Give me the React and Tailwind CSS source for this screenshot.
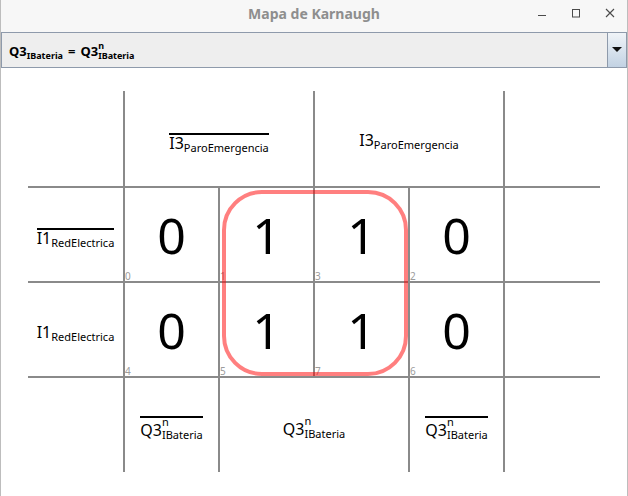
import React from 'react'

/* ───────────── small pieces ───────────── */
function Label({ main, sub, sup, bar }) {
  return (
    <div className="inline-flex flex-col text-black">
      {bar && <div className={`h-[2px] bg-black ${sup ? '-mb-[1px]' : ''}`} />}
      <div className="whitespace-nowrap text-[16px] leading-[16px]">
        <span>{main}</span>
        {sup ? (
          <span className="inline-flex flex-col gap-[3px] align-[10px] text-[11px] leading-[10px]">
            <span>{sup}</span>
            <span>{sub}</span>
          </span>
        ) : (
          <span className="align-[-3px] text-[11px]">{sub}</span>
        )}
      </div>
    </div>
  )
}

function Cell({ value, index }) {
  return (
    <div className="relative flex items-center justify-center border-t-2 border-l-2 border-[#8a8a8a]">
      <span className="text-[50px] leading-none text-black">{value}</span>
      <span className="absolute bottom-0 left-0 text-[10px] leading-none text-[#9c9c9c]">{index}</span>
    </div>
  )
}

const rows = [
  { label: true, bar: true, cells: [[0, 0], [1, 1], [1, 3], [0, 2]] },
  { label: true, bar: false, cells: [[0, 4], [1, 5], [1, 7], [0, 6]] },
]

/* ───────────── page ───────────── */
export default function App() {
  return (
    <div className="w-[628px] h-[496px] flex flex-col bg-white border-x border-[#bdbdbd] font-['Noto_Sans',sans-serif] overflow-hidden">
      {/* title bar */}
      <div className="h-[32px] shrink-0 grid grid-cols-[1fr_auto_1fr] items-start bg-[#f7f7f7]">
        <div />
        <div className="h-[26px] flex items-center text-[14px] font-bold text-[#8e8e8e]">Mapa de Karnaugh</div>
        <div className="flex justify-end">
          <div className="w-[34px] h-[26px] flex items-center justify-center">
            <svg width="16" height="16" viewBox="0 0 16 16">
              <path d="M4 10.5h8" stroke="#4a4a4a" strokeWidth="1" />
            </svg>
          </div>
          <div className="w-[34px] h-[26px] flex items-center justify-center">
            <svg width="16" height="16" viewBox="0 0 16 16">
              <rect x="4.5" y="4.5" width="7" height="7.5" fill="none" stroke="#4a4a4a" strokeWidth="1" />
            </svg>
          </div>
          <div className="w-[34px] h-[26px] flex items-center justify-center">
            <svg width="16" height="16" viewBox="0 0 16 16">
              <path d="M4 4l8 8M12 4l-8 8" stroke="#4a4a4a" strokeWidth="1.1" />
            </svg>
          </div>
        </div>
      </div>

      {/* combo */}
      <div className="h-[36px] shrink-0 flex border border-[#8e9aab]">
        <div className="flex-1 flex items-center pl-[7px] pt-[3px] bg-[#eeeeee] font-bold text-black">
          <span className="whitespace-nowrap text-[13px] leading-[13px]">
            Q3<span className="align-[-3px] text-[9px]">IBateria</span>
            <span className="mx-[5px]">=</span>
            Q3
            <span className="inline-flex flex-col gap-[2px] align-[7px] text-[9px] leading-[8px]">
              <span>n</span>
              <span>IBateria</span>
            </span>
          </span>
        </div>
        <div className="w-[19px] flex items-center justify-center border-l border-[#8e9aab] bg-gradient-to-b from-[#f0f4f8] to-[#c2d2e3]">
          <svg width="10" height="6" viewBox="0 0 10 6">
            <path d="M0 0h10L5 5z" fill="#111" />
          </svg>
        </div>
      </div>

      {/* karnaugh map */}
      <div className="relative ml-[27px] mt-[23px] w-[572px] grid grid-cols-[95px_95px_95px_95px_95px_97px] grid-rows-[95px_95px_95px_96px] border-[#8a8a8a]">
        {/* header */}
        <div />
        <div className="col-span-2 flex items-center justify-center pt-[12px] border-l-2 border-[#8a8a8a]">
          <Label main="I3" sub="ParoEmergencia" bar />
        </div>
        <div className="col-span-2 flex items-center justify-center pt-[8px] border-l-2 border-[#8a8a8a]">
          <Label main="I3" sub="ParoEmergencia" />
        </div>
        <div className="border-l-2 border-[#8a8a8a]" />

        {/* value rows */}
        {rows.map((r, ri) => (
          <React.Fragment key={ri}>
            <div className="flex items-center justify-center pt-[10px] border-t-2 border-[#8a8a8a]">
              <Label main="I1" sub="RedElectrica" bar={r.bar} />
            </div>
            {r.cells.map(([v, i]) => <Cell key={i} value={v} index={i} />)}
            <div className="border-t-2 border-l-2 border-[#8a8a8a]" />
          </React.Fragment>
        ))}

        {/* footer */}
        <div className="border-t-2 border-[#8a8a8a]" />
        <div className="flex items-center justify-center pt-[6px] border-t-2 border-l-2 border-[#8a8a8a]">
          <Label main="Q3" sup="n" sub="IBateria" bar />
        </div>
        <div className="col-span-2 flex items-center justify-center pt-[4px] border-t-2 border-l-2 border-[#8a8a8a]">
          <Label main="Q3" sup="n" sub="IBateria" />
        </div>
        <div className="flex items-center justify-center pt-[6px] border-t-2 border-l-2 border-[#8a8a8a]">
          <Label main="Q3" sup="n" sub="IBateria" bar />
        </div>
        <div className="border-t-2 border-l-2 border-[#8a8a8a]" />

        {/* grouping loop */}
        <div className="absolute left-[194px] top-[99px] w-[186px] h-[186px] rounded-[40px] border-4 border-[#ff0000]/50" />
      </div>
    </div>
  )
}
